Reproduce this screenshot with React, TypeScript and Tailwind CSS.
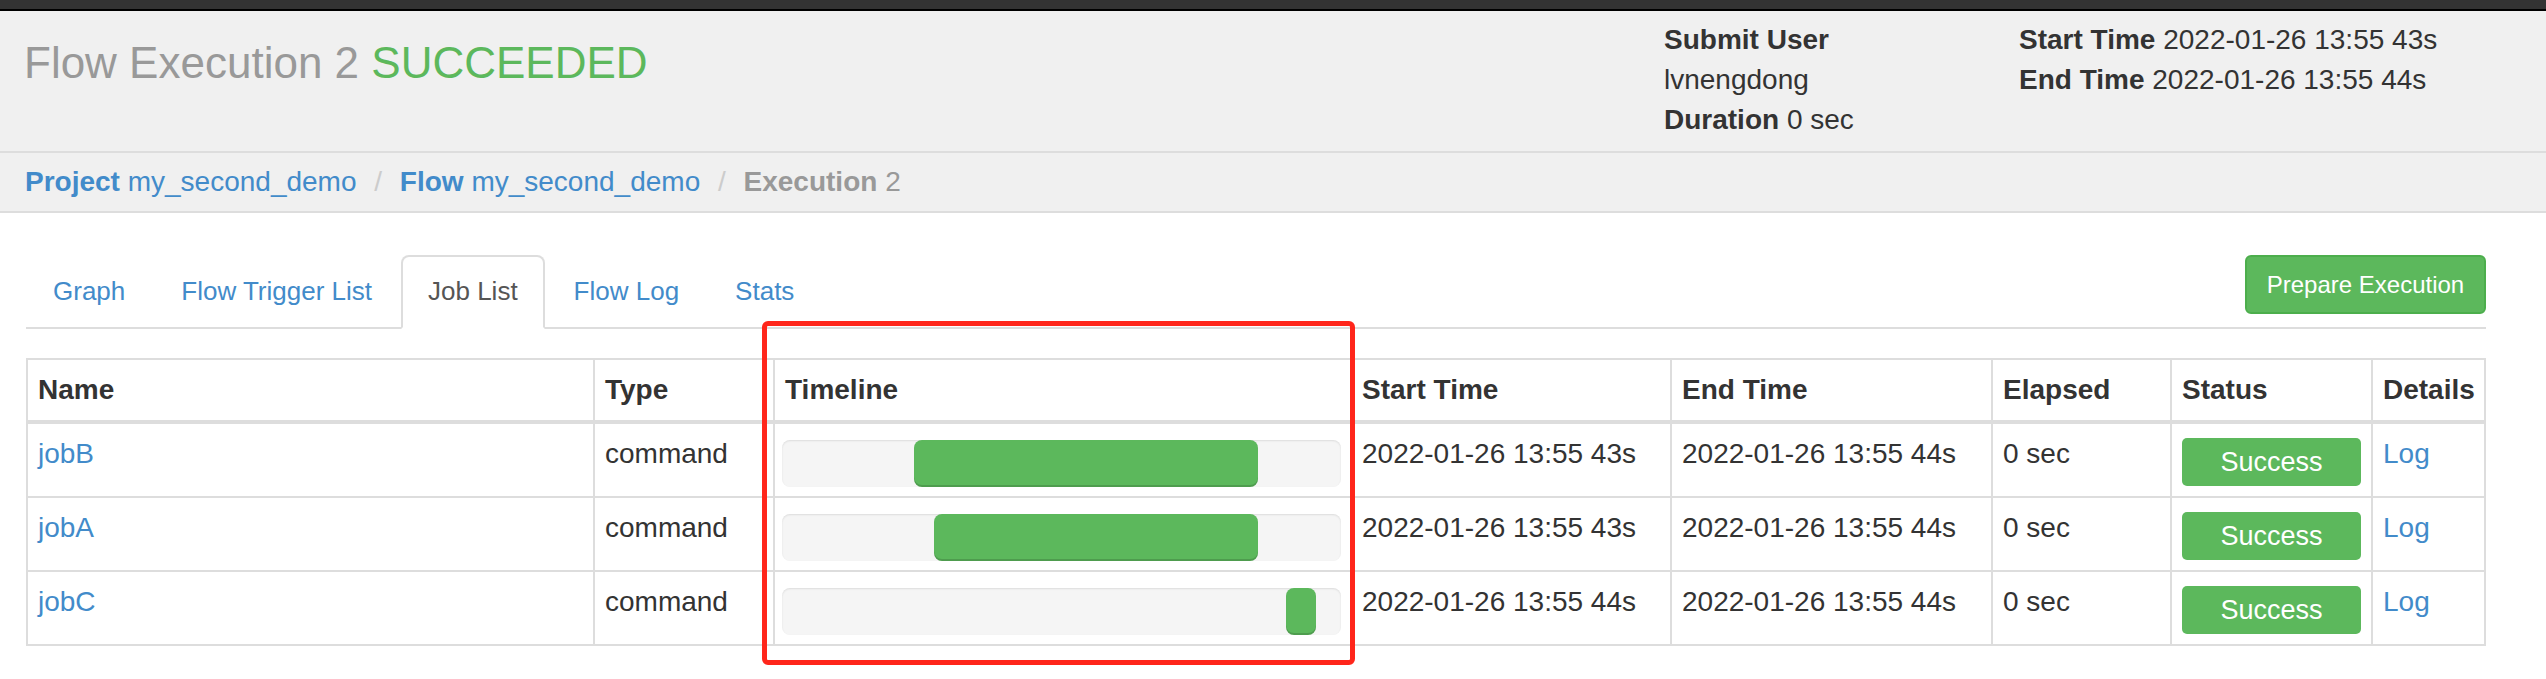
import React from "react"

const jobs = [
  { name: "jobB", start: "2022-01-26 13:55 43s", end: "2022-01-26 13:55 44s", bar: "ml-[132px] w-[344px]" },
  { name: "jobA", start: "2022-01-26 13:55 43s", end: "2022-01-26 13:55 44s", bar: "ml-[152px] w-[324px]" },
  { name: "jobC", start: "2022-01-26 13:55 44s", end: "2022-01-26 13:55 44s", bar: "ml-[504px] w-[30px]" },
]

const tabs = ["Graph", "Flow Trigger List", "Job List", "Flow Log", "Stats"]

const cols = "grid grid-cols-[567px_180px_577px_320px_321px_179px_201px_113px]"
const th = "h-[64px] border-r-2 border-b-4 border-[#ddd] px-[10px] pt-[10px] font-bold"
const td = "h-[74px] border-r-2 border-b-2 border-[#ddd] px-[10px] pt-[10px]"

const App = () => {
  return (
    <div className="relative min-h-[679px] bg-white text-[#333] text-[28px] leading-[40px] font-['Liberation_Sans',Arial,sans-serif]">
      {/* top bar */}
      <div className="h-[11px] bg-[#333] border-b-2 border-black" />

      {/* page header */}
      <div className="flex bg-[#f0f0f0] border-b-2 border-[#ddd] pl-[24px] pt-[9px] pb-[11px]">
        <div className="w-[1640px] pt-[19px]">
          <h1 className="text-[44px] leading-[48px] text-[#999]">
            Flow Execution 2 <span className="text-[#5cb85c]">SUCCEEDED</span>
          </h1>
        </div>
        <div className="w-[355px]">
          <div className="font-bold">Submit User</div>
          <div>lvnengdong</div>
          <div>
            <b>Duration</b> 0 sec
          </div>
        </div>
        <div>
          <div>
            <b>Start Time</b> 2022-01-26 13:55 43s
          </div>
          <div>
            <b>End Time</b> 2022-01-26 13:55 44s
          </div>
        </div>
      </div>

      {/* breadcrumb */}
      <div className="bg-[#f0f0f0] border-b-2 border-[#ddd] pl-[25px] py-[9px]">
        <span className="text-[#428bca]">
          <b>Project</b> my_second_demo
        </span>{" "}
        <span className="px-[10px] text-[#ccc]">/&nbsp;</span>
        <span className="text-[#428bca]">
          <b>Flow</b> my_second_demo
        </span>{" "}
        <span className="px-[10px] text-[#ccc]">/&nbsp;</span>
        <span className="text-[#999]">
          <b>Execution</b> 2
        </span>
      </div>

      {/* tabs */}
      <div className="mt-[42px] ml-[26px] w-[2460px] flex items-start justify-between border-b-2 border-[#ddd]">
        <ul className="flex -mb-[2px]">
          {tabs.map((t) => (
            <li key={t} className="mr-[2px]">
              <a
                className={
                  t === "Job List"
                    ? "block border-2 border-[#ddd] border-b-transparent bg-white rounded-t-[8px] px-[25px] pt-[16px] pb-[17px] text-[26px] leading-[37px] text-[#555]"
                    : "block border-2 border-transparent rounded-t-[8px] px-[25px] pt-[16px] pb-[17px] text-[26px] leading-[37px] text-[#428bca]"
                }
              >
                {t}
              </a>
            </li>
          ))}
        </ul>
        <button className="w-[241px] h-[59px] flex items-center justify-center rounded-[6px] border-2 border-[#4cae4c] bg-[#5cb85c] text-[24px] text-white">
          Prepare Execution
        </button>
      </div>

      {/* job table */}
      <div className="mt-[29px] ml-[26px] w-[2460px] border-l-2 border-t-2 border-[#ddd]">
        <div className={cols}>
          <div className={th}>Name</div>
          <div className={th}>Type</div>
          <div className={th}>Timeline</div>
          <div className={th}>Start Time</div>
          <div className={th}>End Time</div>
          <div className={th}>Elapsed</div>
          <div className={th}>Status</div>
          <div className={th}>Details</div>
        </div>
        {jobs.map((j) => (
          <div key={j.name} className={cols}>
            <div className={td}>
              <a className="text-[#428bca]">{j.name}</a>
            </div>
            <div className={td}>command</div>
            <div className="h-[74px] border-r-2 border-b-2 border-[#ddd] pl-[7px] pr-[9px] pt-[16px]">
              <div className="h-[47px] rounded-[8px] bg-[#f5f5f5] shadow-[inset_0_1px_2px_rgba(0,0,0,0.1)] flex">
                <div className={`h-full rounded-[8px] bg-[#5cb85c] shadow-[inset_0_-2px_0_rgba(0,0,0,0.15)] ${j.bar}`} />
              </div>
            </div>
            <div className={td}>{j.start}</div>
            <div className={td}>{j.end}</div>
            <div className={td}>0 sec</div>
            <div className="h-[74px] border-r-2 border-b-2 border-[#ddd] px-[10px] pt-[14px]">
              <div className="h-[48px] rounded-[5px] bg-[#5cb85c] flex items-center justify-center text-[27px] text-white">
                Success
              </div>
            </div>
            <div className={td}>
              <a className="text-[#428bca]">Log</a>
            </div>
          </div>
        ))}
      </div>

      {/* annotation box */}
      <div className="absolute left-[762px] top-[321px] w-[593px] h-[344px] rounded-[6px] border-[5px] border-[#ff261b] pointer-events-none" />
    </div>
  )
}

export default App
